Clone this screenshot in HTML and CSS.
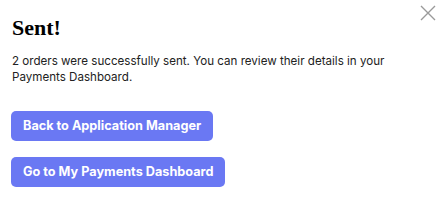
FILE: index.html
```html
<!DOCTYPE html>
<html lang="en">
<head>
    <meta charset="UTF-8">
    <link rel="stylesheet" href="styles.css">
    <title>Sent!</title>
</head>
<body>
    <div class="modal">
        <button class="close-btn" aria-label="Close">
            <svg width="16" height="16" viewBox="0 0 16 16">
                <path d="M1 1 L15 15 M15 1 L1 15" stroke="#9a9a9a" stroke-width="1.4" fill="none"/>
            </svg>
        </button>

        <h1 class="title">Sent!</h1>
        <p class="message">2 orders were successfully sent. You can review their details in your Payments Dashboard.</p>

        <div class="actions">
            <a href="#" class="action-btn">Back to Application Manager</a>
            <a href="#" class="action-btn">Go to My Payments Dashboard</a>
        </div>
    </div>
</body>
</html>
```

FILE: styles.css
```css
body {
    margin: 0;
    padding: 0;
    background-color: #fff;
    font-family: 'Inter', 'Liberation Sans', sans-serif;
}

.modal {
    position: relative;
    padding: 12px;
}

.close-btn {
    position: absolute;
    top: 5px;
    right: 5px;
    border: none;
    background: none;
    padding: 0;
    cursor: pointer;
}

.title {
    font-family: 'Liberation Serif', serif;
    font-size: 22px;
    font-weight: bold;
    color: #000;
    margin: 2px 0 0 0;
    line-height: 28px;
}

.message {
    font-size: 11.6px;
    line-height: 16px;
    color: #222;
    margin: 11px 0 0 0;
    width: 400px;
}

.actions {
    display: flex;
    flex-direction: column;
    align-items: flex-start;
    gap: 16px;
    margin-top: 26px;
}

.action-btn {
    display: inline-block;
    background-color: #6a78f3;
    color: #fff;
    font-size: 12.7px;
    font-weight: bold;
    text-decoration: none;
    padding: 0 12px;
    height: 30px;
    line-height: 30px;
    border-radius: 5px;
    margin-left: -1px;
}
```
